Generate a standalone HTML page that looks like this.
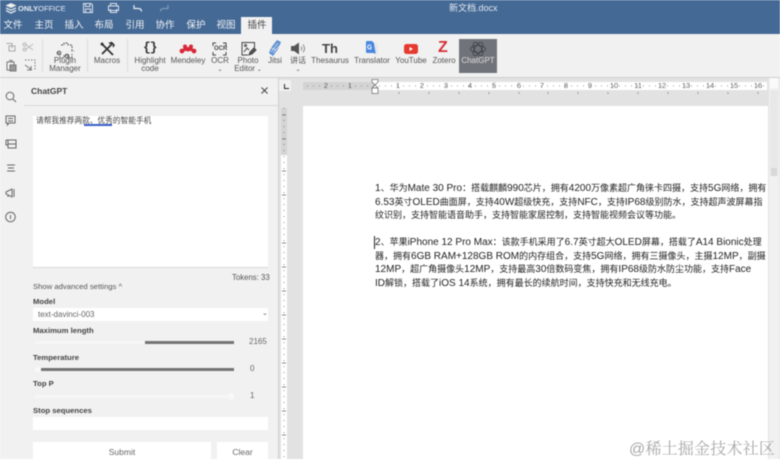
<!DOCTYPE html>
<html><head><meta charset="utf-8"><style>
html,body{margin:0;padding:0;background:#fff}
body{width:780px;height:464px;overflow:hidden;position:relative;font-family:"Liberation Sans","Noto Sans CJK SC",sans-serif}
#w{position:absolute;left:0;top:0;width:780px;height:459px;overflow:hidden;background:#f1f1f1;filter:blur(.45px)}
.a{position:absolute;white-space:nowrap}
.t{position:absolute;top:20px;width:30px;text-align:center;color:#fff;font-size:9.5px;line-height:12px;opacity:.92}
.l{position:absolute;text-align:center;color:#555;font-size:8px;line-height:7.5px;white-space:nowrap;transform:translateX(-50%)}
.n{position:absolute;top:82px;font-size:7.5px;line-height:8px;color:#666;transform:translateX(-50%)}
.d{position:absolute;left:375px;font-size:9px;line-height:13px;color:#222;white-space:nowrap}
.d span{font-size:10px}
.b{position:absolute;font-size:7.7px;font-weight:bold;color:#444;line-height:10px;white-space:nowrap}
.sep{position:absolute;top:39px;width:1px;height:33px;background:#dcdcdc}
svg{position:absolute;overflow:visible}
</style></head><body><div id="w">
<div class="a" style="left:0;top:0;width:780px;height:34px;background:#446995"></div>
<svg style="left:5px;top:3px" width="12" height="11" viewBox="0 0 12 11"><path d="M6 0 11.500 2.500 6 5 .5 2.500z" fill="#eee"/><path d="M1 5 6 7.200 11 5M1 7.500 6 10 11 7.500" stroke="#dfe6ee" fill="none" stroke-width="1.300"/></svg>
<div class="a" style="left:18px;top:3px;color:#e8edf3;font-size:7.500px;line-height:11px;font-weight:bold">ONLY<span style="font-weight:normal">OFFICE</span></div>
<svg style="left:83px;top:3px" width="10" height="10" viewBox="0 0 10 10" fill="none" stroke="#dde4ec"><path d="M.5.500H8L9.500 2V9.500H.5zM2.500.5V3.500H7V.5M2.500 9.500V6H7.500V9.500"/></svg>
<svg style="left:108px;top:3px" width="11" height="10" viewBox="0 0 11 10" fill="none" stroke="#dde4ec"><path d="M2.500 3V.5H8.500V3M.5 3H10.500V7.500H.5zM2.500 6V9.500H8.500V6"/></svg>
<svg style="left:133px;top:4px" width="10" height="8" viewBox="0 0 10 8" fill="none" stroke="#e8edf3" stroke-width="1.200"><path d="M1 1V4.500H5C8 4.500 8.500 6 8.500 7.500"/></svg>
<svg style="left:159px;top:4px" width="10" height="8" viewBox="0 0 10 8" fill="none" stroke="#7e9abb" stroke-width="1.200"><path d="M9 1V4.500H5C2 4.500 1.500 6 1.500 7.500"/></svg>
<div class="a" style="left:449px;top:3px;color:#e4e9f0;font-size:9px;line-height:11px">新文档.docx</div>
<div class="t" style="left:-2px">文件</div><div class="t" style="left:29px">主页</div><div class="t" style="left:59px">插入</div><div class="t" style="left:89px">布局</div><div class="t" style="left:120px">引用</div><div class="t" style="left:150px">协作</div><div class="t" style="left:181px">保护</div><div class="t" style="left:211px">视图</div>
<div class="a" style="left:241px;top:17px;width:31px;height:18px;background:#f1f1f1"></div>
<div class="t" style="left:242px;color:#444;opacity:1">插件</div>
<div class="a" style="left:0;top:77px;width:780px;height:1px;background:#cfcfcf"></div>

<svg style="left:6px;top:42px" width="30" height="30" viewBox="0 0 30 30" fill="none" stroke="#a9a9a9"><path d="M.5 1.500H6V6M3 4H9V9H3z"/><path d="M19 2 27 8M19 8 27 2" stroke="#bbb"/><circle cx="18.500" cy="2.500" r="1.500" stroke="#bbb"/><circle cx="18.500" cy="7.500" r="1.500" stroke="#bbb"/><path d="M1 20H8V28H1zM3 18.500H6V20" stroke="#777"/><path d="M4 23H10V29H4z" fill="#999" stroke="#777"/><path d="M19 18H29V29" stroke="#777" stroke-dasharray="1.500 1.500"/><path d="M19 23 26 28M25 24V28H21" stroke="#777"/></svg>
<div class="sep" style="left:42px"></div>
<svg style="left:56px;top:42px" width="18" height="18" viewBox="0 0 18 18" fill="none" stroke="#555" stroke-dasharray="2 1.200"><path d="M5 3H8V1H12V3H16V9H18M1 11H4V16H8V13H12V16H16V12"/><circle cx="3" cy="11" r="1.800" stroke-dasharray="none"/><circle cx="11" cy="14" r="1.800" stroke-dasharray="none"/></svg>
<div class="l" style="left:65px;top:57px">Plugin<br>Manager</div>
<div class="sep" style="left:87px"></div>
<svg style="left:100px;top:42px" width="15" height="14" viewBox="0 0 15 14" fill="none" stroke="#333" stroke-width="1.800"><path d="M2 2 13 13M13 1 2 12"/><path d="M9 1.500 11.500.5 14 3 13 5" stroke-width="1.500"/><path d="M1 3 3 1" stroke-width="2.500"/></svg>
<div class="l" style="left:107px;top:57px">Macros</div>
<div class="sep" style="left:127px"></div>
<div class="a" style="left:143px;top:40px;font:bold 13px/16px 'Liberation Mono',monospace;color:#333;letter-spacing:-1px">{}</div>
<div class="l" style="left:150px;top:57px">Highlight<br>code</div>
<svg style="left:179px;top:44px" width="18" height="10" viewBox="0 0 18 10" fill="#d9283a"><circle cx="6" cy="2.500" r="2"/><circle cx="12" cy="2.500" r="2"/><circle cx="9" cy="5.500" r="2"/><circle cx="3" cy="7" r="2.400"/><circle cx="15" cy="7" r="2.400"/><path d="M5 3H13L15 7H3z"/></svg>
<div class="l" style="left:188px;top:57px">Mendeley</div>
<svg style="left:212px;top:42px" width="15" height="14" viewBox="0 0 15 14" fill="none" stroke="#444"><path d="M1 4V1H4M11 1H14V4M1 10V13H4M11 13H14V10"/></svg>
<div class="a" style="left:214px;top:45px;font-size:6px;line-height:8px;font-weight:bold;color:#444">OCR</div>
<div class="l" style="left:220px;top:57px">OCR<br><span style="font-size:6px">⌄</span></div>
<svg style="left:241px;top:42px" width="15" height="14" viewBox="0 0 15 14" fill="none" stroke="#444"><path d="M13.500 6V.5H1V13H7"/><path d="M3 10 6 6 8 8"/><path d="M8 13 9 10 13 6 15 8 11 12z" fill="#555"/><circle cx="4.500" cy="3.500" r="1"/></svg>
<div class="l" style="left:248px;top:57px">Photo<br>Editor<span style="font-size:6px"> ⌄</span></div>
<svg style="left:269px;top:40px" width="12" height="16" viewBox="0 0 12 16"><path d="M8 0 12 2 9 9 4 16 0 13 2 8z" fill="#5b8fd0"/><path d="M2 12 9 3M4 13 10 6M2 8 7 10" stroke="#dbe7f5" stroke-width=".8"/></svg>
<div class="l" style="left:275px;top:57px">Jitsi</div>
<svg style="left:291px;top:42px" width="15" height="14" viewBox="0 0 15 14"><path d="M0 4H3L8 .5V12.500L3 9H0z" fill="#555"/><path d="M10 4.500Q11.500 6.500 10 8.500M12 2.500Q15 6.500 12 10.500" stroke="#888" fill="none"/></svg>
<div class="l" style="left:298px;top:57px">讲话<br><span style="font-size:6px">⌄</span></div>
<div class="a" style="left:322px;top:40px;font-size:13px;line-height:17px;font-weight:bold;color:#444">Th</div>
<div class="l" style="left:330px;top:57px">Thesaurus</div>
<svg style="left:365px;top:41px" width="14" height="15" viewBox="0 0 14 15"><path d="M1 1Q1 0 2 0H7L9 2 12 13 8 12H2Q1 12 1 11z" fill="#4a88e0"/><path d="M9 3H13V12L11 14" fill="#e8e8e8"/><path d="M6 4.500A2 2 0 1 0 6 7.500V6H5" stroke="#fff" fill="none"/></svg>
<div class="l" style="left:372px;top:57px">Translator</div>
<svg style="left:404px;top:44px" width="14" height="10" viewBox="0 0 14 10"><rect width="14" height="10" rx="2.500" fill="#e53a2f"/><path d="M5.500 3 9 5 5.500 7z" fill="#fff"/></svg>
<div class="l" style="left:411px;top:57px">YouTube</div>
<div class="a" style="left:438px;top:39px;font-size:16px;line-height:18px;font-weight:bold;color:#d42f36">Z</div>
<div class="l" style="left:444px;top:57px">Zotero</div>
<div class="a" style="left:459px;top:39px;width:38px;height:34px;background:#70747a"></div>
<svg style="left:470px;top:41px" width="16" height="16" viewBox="0 0 16 16" fill="none" stroke="#3d3f42" stroke-width=".8"><ellipse cx="8" cy="8" rx="7.500" ry="3.500"/><ellipse cx="8" cy="8" rx="7.500" ry="3.500" transform="rotate(60 8 8)"/><ellipse cx="8" cy="8" rx="7.500" ry="3.500" transform="rotate(120 8 8)"/></svg>
<div class="l" style="left:478px;top:57px;color:#ddd">ChatGPT</div>

<div class="a" style="left:24px;top:78px;width:254px;height:381px;background:#f1f1f1"></div>
<div class="a" style="left:24px;top:105px;width:254px;height:1px;background:#d8d8d8"></div>
<svg style="left:5px;top:91px" width="12" height="130" viewBox="0 0 12 130" fill="none" stroke="#666"><circle cx="5" cy="5" r="3.800"/><path d="M8 8 11 11"/><path d="M1 25H10V32H4L2.500 34V32H1zM3 27.500H8M3 30H8"/><path d="M3 49H11V57H3zM1 49H9M1 49V54H3M3 53H11"/><path d="M2 74H10M3 77H9M2 80H10"/><path d="M1 101 7 98V106L1 103zM9 98V106M3 104V106"/><circle cx="5.500" cy="126" r="4.800"/><path d="M5.500 124V128"/></svg>
<div class="b" style="left:31px;top:86px;font-size:8.500px">ChatGPT</div>
<svg style="left:261px;top:87px" width="7" height="7" viewBox="0 0 7 7" stroke="#444" fill="none"><path d="M.5.500 6.500 6.500M6.500.5.500 6.500"/></svg>

<div class="a" style="left:33px;top:116px;width:235px;height:151px;background:#fff;border-bottom:1px solid #d8d8d8"></div>
<div class="a" style="left:36px;top:116px;font-size:7.700px;line-height:10px;color:#444">请帮我推荐两款、优秀的智能手机</div>
<div class="a" style="left:84px;top:124px;width:28px;height:1.500px;background:#3a5fc9"></div>
<div class="a" style="left:232px;top:273px;font-size:7.800px;line-height:10px;color:#555">Tokens: 33</div>
<div class="a" style="left:33px;top:282px;font-size:7.700px;line-height:10px;color:#555">Show advanced settings ^</div>
<div class="b" style="left:33px;top:297px">Model</div>
<div class="a" style="left:33px;top:308px;width:235px;height:13px;background:#fff"></div>
<div class="a" style="left:38px;top:309px;font-size:8px;line-height:11px;color:#666">text-davinci-003</div>
<div class="a" style="left:262px;top:309px;font-size:7px;line-height:10px;color:#666">⌄</div>
<div class="b" style="left:33px;top:326px">Maximum length</div>
<div class="a" style="left:35px;top:341px;width:110px;height:3px;background:#f6f6f6"></div>
<div class="a" style="left:145px;top:341px;width:89px;height:3px;background:#757575"></div>
<div class="a" style="left:249px;top:337px;font-size:8px;line-height:10px;color:#666">2165</div>
<div class="b" style="left:33px;top:353px">Temperature</div>
<div class="a" style="left:35px;top:367px;width:6px;height:5px;background:#f8f8f8"></div>
<div class="a" style="left:41px;top:368px;width:193px;height:3px;background:#757575"></div>
<div class="a" style="left:250px;top:364px;font-size:8px;line-height:10px;color:#666">0</div>
<div class="b" style="left:33px;top:379px">Top P</div>
<div class="a" style="left:35px;top:395px;width:196px;height:3px;background:#f6f6f6"></div>
<div class="a" style="left:228px;top:393px;width:6px;height:7px;background:#f8f8f8;border-radius:3px"></div>
<div class="a" style="left:250px;top:391px;font-size:8px;line-height:10px;color:#666">1</div>
<div class="b" style="left:33px;top:406px">Stop sequences</div>
<div class="a" style="left:33px;top:417px;width:235px;height:13px;background:#fff"></div>
<div class="a" style="left:33px;top:442px;width:178px;height:18px;background:#fff;text-align:center;font-size:8.500px;line-height:20px;color:#666">Submit</div>
<div class="a" style="left:217px;top:442px;width:51px;height:18px;background:#fff;text-align:center;font-size:8.500px;line-height:20px;color:#666">Clear</div>

<div class="a" style="left:278px;top:78px;width:502px;height:381px;background:#e2e2e2;border-left:1px solid #d0d0d0;box-sizing:border-box"></div>
<div class="a" style="left:279px;top:80px;width:12px;height:11px;background:#f1f1f1"></div>
<div class="a" style="left:303px;top:82px;width:72px;height:8px;background:#d4d4d4"></div>
<div class="a" style="left:375px;top:82px;width:392px;height:8px;background:#fff"></div>
<svg style="left:284px;top:84px" width="5" height="5" viewBox="0 0 5 5" fill="none" stroke="#222"><path d="M.5 0V4.500H5"/></svg>
<svg style="left:303px;top:82px" width="465" height="14" viewBox="0 0 465 14"><path d="M4 4H72M76 4H462" stroke="#777" stroke-width="1" stroke-dasharray="1 5" opacity=".7"/><path d="M96 10V12M126 10V12M156 10V12M186 10V12M216 10V12M245 10V12M275 10V12M305 10V12M335 10V12M365 10V12M395 10V12M425 10V12M455 10V12" stroke="#999"/></svg>
<div class="n" style="left:326px">2</div><div class="n" style="left:350px">1</div><div class="n" style="left:398px">1</div><div class="n" style="left:422px">2</div><div class="n" style="left:446px">3</div><div class="n" style="left:470px">4</div><div class="n" style="left:494px">5</div><div class="n" style="left:519px">6</div><div class="n" style="left:542px">7</div><div class="n" style="left:566px">8</div><div class="n" style="left:590px">9</div><div class="n" style="left:614px">10</div><div class="n" style="left:638px">11</div><div class="n" style="left:662px">12</div><div class="n" style="left:686px">13</div><div class="n" style="left:710px">14</div><div class="n" style="left:734px">15</div><div class="n" style="left:758px">16</div>
<svg style="left:371px;top:79px" width="8" height="15" viewBox="0 0 8 15" fill="#fff" stroke="#777" stroke-width=".8"><path d="M1 .5H7V3L4 6 1 3z"/><path d="M4 6 7 9H1z"/><rect x="1" y="9" width="6" height="5.500"/></svg>

<div class="a" style="left:281px;top:108px;width:6px;height:47px;background:#d4d4d4"></div>
<div class="a" style="left:281px;top:155px;width:6px;height:304px;background:#fff"></div>
<svg style="left:281px;top:108px" width="6" height="351" viewBox="0 0 6 351"><path d="M3 0V351" stroke="#777" stroke-dasharray="1 5" opacity=".8"/><path d="M1 7H5M1 31H5M1 63H5M1 87H5M1 135H5M1 159H5M1 183H5M1 207H5M1 231H5M1 255H5M1 279H5M1 303H5M1 327H5" stroke="#888"/></svg>

<div class="a" style="left:303px;top:106px;width:465px;height:353px;background:#fff"></div>
<div class="a" style="left:769px;top:78px;width:10px;height:381px;background:#f1f1f1"></div>
<div class="a" style="left:770px;top:78px;width:8px;height:10px;background:#fafafa"></div>
<div class="a" style="left:770px;top:90px;width:8px;height:86px;background:#e8e8e8"></div>
<div class="a" style="left:771px;top:168px;width:6px;height:8px;background:#d8d8d8"></div>

<div class="d" style="top:182px"><span>1</span>、华为<span>Mate 30 Pro</span>：搭载麒麟<span>990</span>芯片，拥有<span>4200</span>万像素超广角徕卡四摄，支持<span>5G</span>网络，拥有</div>
<div class="d" style="top:196px"><span>6.53</span>英寸<span>OLED</span>曲面屏，支持<span>40W</span>超级快充，支持<span>NFC</span>，支持<span>IP68</span>级别防水，支持超声波屏幕指</div>
<div class="d" style="top:209px">纹识别，支持智能语音助手，支持智能家居控制，支持智能视频会议等功能。</div>
<div class="d" style="top:236px"><span>2</span>、苹果<span>iPhone 12 Pro Max</span>：该款手机采用了<span>6.7</span>英寸超大<span>OLED</span>屏幕，搭载了<span>A14 Bionic</span>处理</div>
<div class="d" style="top:250px">器，拥有<span>6GB RAM+128GB ROM</span>的内存组合，支持<span>5G</span>网络，拥有三摄像头，主摄<span>12MP</span>，副摄</div>
<div class="d" style="top:263px"><span>12MP</span>，超广角摄像头<span>12MP</span>，支持最高<span>30</span>倍数码变焦，拥有<span>IP68</span>级防水防尘功能，支持<span>Face</span></div>
<div class="d" style="top:277px"><span>ID</span>解锁，搭载了<span>iOS 14</span>系统，拥有最长的续航时间，支持快充和无线充电。</div>
<div class="a" style="left:374px;top:236px;width:1px;height:13px;background:#222"></div>
<div class="a" style="left:629px;top:441px;font-family:'Liberation Sans','Noto Serif CJK SC',serif;font-size:16px;line-height:18px;color:#a8a8a8;letter-spacing:.2px">@稀土掘金技术社区</div>
</div></body></html>
